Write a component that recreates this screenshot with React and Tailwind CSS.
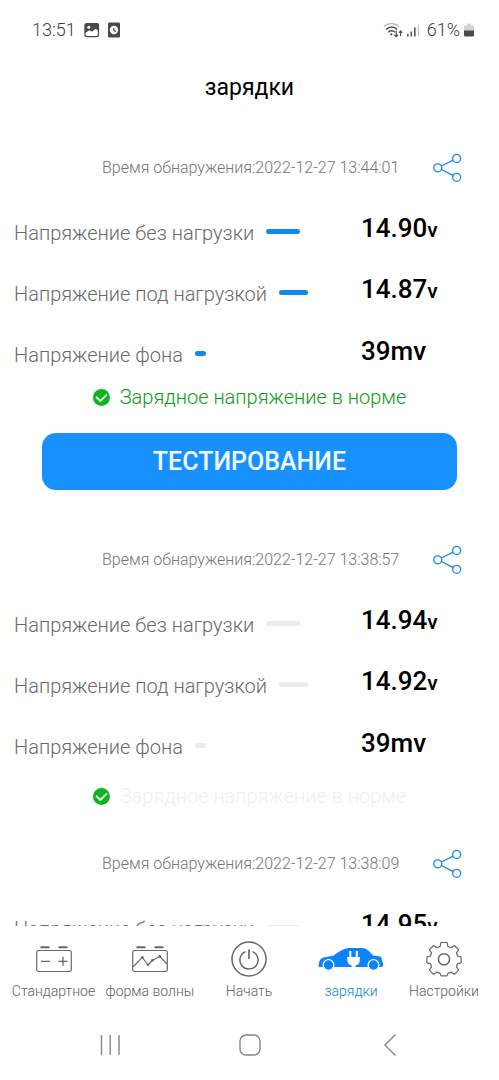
import React from 'react';

const NO_LOAD = { label: 'Напряжение без нагрузки', unit: 'v', bar: 'w-[34px]' };
const LOAD = { label: 'Напряжение под нагрузкой', unit: 'v', bar: 'w-[29px]' };
const RIPPLE = { label: 'Напряжение фона', unit: 'mv', bar: 'w-[11px]' };

const READINGS = [
  {
    time: '2022-12-27 13:44:01',
    active: true,
    verdict: 'Зарядное напряжение в норме',
    rows: [
      { ...NO_LOAD, value: '14.90' },
      { ...LOAD, value: '14.87' },
      { ...RIPPLE, value: '39' },
    ],
  },
  {
    time: '2022-12-27 13:38:57',
    active: false,
    verdict: 'Зарядное напряжение в норме',
    rows: [
      { ...NO_LOAD, value: '14.94' },
      { ...LOAD, value: '14.92' },
      { ...RIPPLE, value: '39' },
    ],
  },
  {
    time: '2022-12-27 13:38:09',
    active: false,
    rows: [{ ...NO_LOAD, value: '14.95' }],
  },
];

function WifiIcon() {
  return (
    <svg className="h-4 w-5" viewBox="0 0 20 16" fill="none" aria-hidden="true">
      <path d="M1 4.6C5 .6 12 .6 16 4.6" stroke="#b5b5b5" strokeWidth="1.1" />
      <path d="M3 7.4c3.2-3.2 8-3.2 11.2 0" stroke="#4a4a4a" strokeWidth="1.4" />
      <path d="M5.2 10.2c2-2 4.9-2 6.8 0" stroke="#4a4a4a" strokeWidth="1.4" />
      <circle cx="8.3" cy="12.3" r="1.1" fill="#4a4a4a" />
      <path d="M13.2 8.8v5.4M11.3 12.6l1.9 2 1.9-2M17.6 14V9.2M15.900 10.800l1.700-1.900 1.700 1.900" stroke="#4a4a4a" strokeWidth="1.1" />
    </svg>
  );
}

function SignalIcon() {
  return (
    <svg className="h-4 w-3" viewBox="0 0 12 16" aria-hidden="true">
      <path d="M0 12h1.600v2.500H0zM3.500 9.500h1.600v5H3.500zM7 5.500h1.600v9H7z" fill="#555" />
      <path d="M10.800 2.500h1v12h-1z" fill="#bbb" />
    </svg>
  );
}

function StatusBar() {
  return (
    <header className="flex h-[60px] shrink-0 items-center justify-between pl-8 pr-[25px] text-lg font-light text-[#3c3c3c]">
      <div className="flex items-center">
        <span>13:51</span>
        <svg className="ml-2 h-4 w-4" viewBox="0 0 16 16" aria-hidden="true">
          <rect x=".9" y="1.6" width="13.6" height="13" rx="2" fill="none" stroke="#4a4a4a" strokeWidth="1.2" />
          <path d="M2.500 1.200h10.500a2 2 0 0 1 2 2v6.300L11.600 6.800 8 9.800 5.500 8.200 1 11V3.200a2 2 0 0 1 1.500-2z" fill="#4a4a4a" />
          <circle cx="4.800" cy="5.200" r="1.500" fill="#fff" />
        </svg>
        <svg className="ml-2 h-4 w-3" viewBox="0 0 12 16" aria-hidden="true">
          <rect width="12" height="15" y=".5" rx="1.2" fill="#4a4a4a" />
          <circle cx="6" cy="8" r="4.2" fill="#fff" />
          <path d="M5.800 6v2.200l2 1.200" fill="none" stroke="#4a4a4a" strokeWidth="1.2" />
        </svg>
      </div>
      <div className="flex items-center">
        <WifiIcon />
        <span className="ml-1 flex">
          <SignalIcon />
        </span>
        <span className="ml-2">61%</span>
        <svg className="ml-1 h-4 w-2.5" viewBox="0 0 10 16" aria-hidden="true">
          <path d="M3 1.500h4v2h2.200l.8.800V9H0V4.300l.8-.8H3z" fill="#d4d4d4" />
          <path d="M0 8.500h10v5.200l-.8.800H.8l-.8-.8z" fill="#4a4a4a" />
        </svg>
      </div>
    </header>
  );
}

function ShareIcon() {
  return (
    <svg className="h-[30px] w-[30px]" viewBox="0 0 30 30" fill="none" stroke="#1787e0" strokeWidth="1.3" aria-hidden="true">
      <circle cx="4.800" cy="14.800" r="4" />
      <circle cx="23.700" cy="5.400" r="4" />
      <circle cx="23.700" cy="24.300" r="4" />
      <path d="M8.400 13 20.100 7.200M8.400 16.500l11.700 5.900" />
    </svg>
  );
}

function Row({ row, color }) {
  return (
    <div className="flex h-[61px] items-center">
      <dt className="flex flex-1 items-center text-[20px] font-light text-[#6a6a6a] whitespace-nowrap">
        {row.label}
        <span className={`mb-0.5 ml-3 h-[5px] rounded-full ${row.bar} ${color}`} />
      </dt>
      <dd className="w-[138px] pb-2 text-[26px] leading-8 font-medium text-black">
        {row.value}
        <span className={row.unit === 'v' ? 'text-[21px]' : ''}>{row.unit}</span>
      </dd>
    </div>
  );
}

function Reading({ reading }) {
  const color = reading.active ? 'bg-[#1088f0]' : 'bg-[#ececec]';
  return (
    <section>
      <div className="flex h-[68px] items-center justify-end pr-9">
        <p className="flex-1 pl-[102px] text-base font-light whitespace-nowrap text-[#757575]">
          Время обнаружения:{reading.time}
        </p>
        <button type="button" aria-label="Поделиться">
          <ShareIcon />
        </button>
      </div>
      <dl className="pl-3.5">
        {reading.rows.map((row) => (
          <Row key={row.label} row={row} color={color} />
        ))}
      </dl>
      {reading.verdict && (
        <div className={`flex items-center justify-center gap-2.5 ${reading.active ? 'h-6' : 'mb-[15px] h-[38px]'}`}>
          <svg className="h-[17px] w-[17px]" viewBox="0 0 17 17" aria-hidden="true">
            <circle cx="8.500" cy="8.500" r="8.500" fill="#0cb520" />
            <path d="M3 7.800 7.300 12l6.800-6.600" fill="none" stroke="#e8ffe8" strokeWidth="1.9" />
          </svg>
          <p className={`text-[20px] leading-6 font-light ${reading.active ? 'text-[#0d9c16]' : 'text-[#f1f1f1]'}`}>
            {reading.verdict}
          </p>
        </div>
      )}
      {reading.active && (
        <div className="mt-6 mb-9 px-[42px]">
          <button type="button" className="h-[57px] w-full rounded-[14px] bg-[#1890ff] text-[25px] font-medium text-[#f0fbff]">
            ТЕСТИРОВАНИЕ
          </button>
        </div>
      )}
    </section>
  );
}

function BatteryShell({ children }) {
  return (
    <svg className="h-9 w-9" viewBox="0 0 36 36" fill="none" stroke="#686868" aria-hidden="true">
      <rect x=".7" y="9.500" width="34.600" height="21" rx="1.800" strokeWidth="1.2" />
      <path d="M4.500 6.300h9M22.500 6.300h9" strokeWidth="2" />
      {children}
    </svg>
  );
}

function StandardIcon() {
  return (
    <BatteryShell>
      <path d="M5 20.300h9M22.500 20.300h9M27 15.800v9" strokeWidth="1.3" />
    </BatteryShell>
  );
}

function WaveIcon() {
  return (
    <BatteryShell>
      <path d="M1 26l9.300-9.600L16 24l4.300-4.500 7.500-4L35 23" strokeWidth="1.1" />
      <g fill="#686868" stroke="none">
        <circle cx="10.300" cy="16.400" r="1.300" />
        <circle cx="16" cy="23.800" r="1.300" />
        <circle cx="20.500" cy="19.300" r="1.300" />
        <circle cx="27.800" cy="15.400" r="1.300" />
      </g>
    </BatteryShell>
  );
}

function PowerIcon() {
  return (
    <svg className="h-9 w-9" viewBox="0 0 36 36" fill="none" stroke="#686868" strokeWidth="1.5" aria-hidden="true">
      <circle cx="18" cy="18" r="17" />
      <path d="M14.500 10.600a9.100 9.100 0 1 0 7 0" />
      <path d="M18 8.500V18" strokeWidth="1.7" />
    </svg>
  );
}

function CarIcon() {
  return (
    <svg className="h-9 w-[66px]" viewBox="0 0 66 36" aria-hidden="true">
      <path
        d="M.6 25.800c.2-5.500 1.700-8.300 5-9.200 3.400-.9 7-1.700 10.200-2.200C21 10.800 25.500 7.200 31 7h13c4.300 0 7.600 3.500 11 7.500l7.200 1c1.800.4 1.500 2.800 1.900 4.500 1.200 1.500 1.100 3.900.9 5.200-.6.600-1.500.7-4 .8H3.200c-1.300 0-2 .2-2.600-.2z"
        fill="#0a83ff"
      />
      <circle cx="10.500" cy="24" r="6" fill="#fff" />
      <circle cx="55.500" cy="24" r="6" fill="#fff" />
      <path d="M4 26.400h13V31H4zM49 26.400h13V31H49z" fill="#fff" />
      <circle cx="10.500" cy="24" r="4.700" fill="#0a83ff" />
      <circle cx="55.500" cy="24" r="4.700" fill="#0a83ff" />
      <path d="M31.300 10h2v6h4.500v-6h2v6h2v3.200c0 3-1.900 4.900-4.500 5.600V27h-3.500v-2.200c-2.300-.7-4.500-2.600-4.500-5.600V16h2z" fill="#fff" />
    </svg>
  );
}

function GearIcon() {
  return (
    <svg className="h-9 w-9" viewBox="0 0 36 36" fill="none" stroke="#686868" strokeWidth="1.2" strokeLinejoin="round" aria-hidden="true">
      <path d="M15 1.500h6l.9 3.900 3.100 1.300 3.400-2.200 4.200 4.200-2.200 3.400 1.300 3.100 3.400.8v5.800l-3.400.8-1.300 3.100 2.200 3.400-4.200 4.200-3.400-2.200-3.100 1.300-.9 2.400h-6l-.9-2.400L11 31.100l-3.400 2.200-4.200-4.200 2.200-3.400-1.300-3.100-3.400-.8V16l3.400-.8 1.300-3.100-2.200-3.400 4.200-4.200L11 6.700l3.100-1.300z" />
      <circle cx="18" cy="18.300" r="5.600" strokeWidth="1.5" />
    </svg>
  );
}

const TABS = [
  { label: 'Стандартное', icon: StandardIcon },
  { label: 'форма волны', icon: WaveIcon },
  { label: 'Начать', icon: PowerIcon },
  { label: 'зарядки', icon: CarIcon, active: true },
  { label: 'Настройки', icon: GearIcon },
];

function TabBar() {
  return (
    <nav className="grid h-[84px] shrink-0 grid-cols-[99fr_94fr_104fr_100fr_86fr] bg-white pt-[15px] pr-3 pl-1">
      {TABS.map(({ label, icon: Icon, active }) => (
        <a
          key={label}
          href="#"
          aria-current={active ? 'page' : undefined}
          className={`flex flex-col items-center gap-1 text-sm font-light whitespace-nowrap ${active ? 'text-[#0a7fe0]' : 'text-[#606060]'}`}
        >
          <Icon />
          {label}
        </a>
      ))}
    </nav>
  );
}

function SystemBar() {
  return (
    <footer className="flex h-[70px] shrink-0 items-center justify-between bg-white px-[98px]">
      <button type="button" aria-label="Недавние">
        <svg className="h-6 w-6" viewBox="0 0 24 24" stroke="#858585" strokeWidth="1.4" aria-hidden="true">
          <path d="M3.500 2v20M12.200 2v20M21 2v20" />
        </svg>
      </button>
      <button type="button" aria-label="Домой">
        <svg className="h-6 w-6" viewBox="0 0 24 24" fill="none" stroke="#858585" strokeWidth="1.4" aria-hidden="true">
          <rect x="2" y="2" width="20" height="20" rx="6" />
        </svg>
      </button>
      <button type="button" aria-label="Назад">
        <svg className="h-6 w-6" viewBox="0 0 24 24" fill="none" stroke="#858585" strokeWidth="1.4" aria-hidden="true">
          <path d="M18.500 1.500 8 12l10.500 10.500" />
        </svg>
      </button>
    </footer>
  );
}

export default function App() {
  return (
    <div className="flex h-screen flex-col overflow-hidden bg-[#fefefe] font-['Roboto',sans-serif]">
      <StatusBar />
      <h1 className="shrink-0 py-3 text-center text-[23px] leading-8 font-normal text-black">зарядки</h1>
      <main className="min-h-0 flex-1 overflow-hidden pt-[18px]">
        {READINGS.map((reading) => (
          <Reading key={reading.time} reading={reading} />
        ))}
      </main>
      <TabBar />
      <SystemBar />
    </div>
  );
}
